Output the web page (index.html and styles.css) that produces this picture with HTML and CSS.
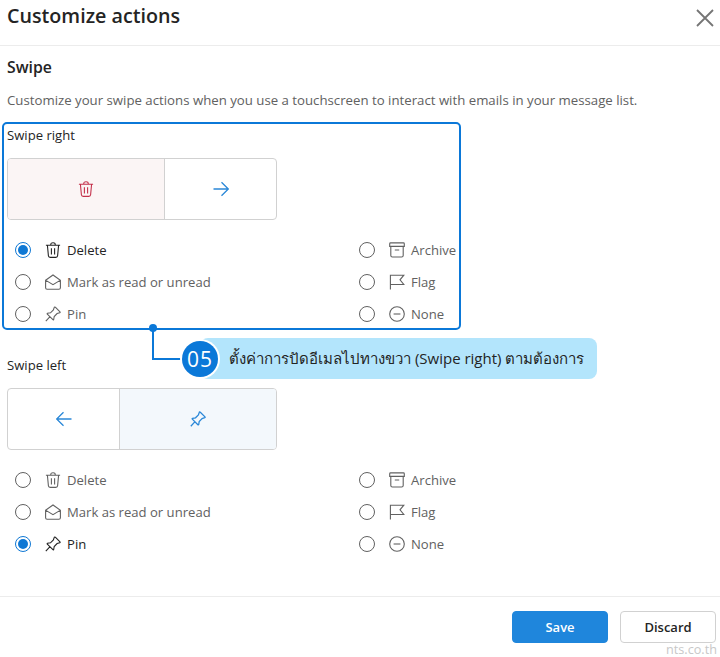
FILE: index.html
```html
<!DOCTYPE html>
<html lang="en">
<head>
  <meta charset="UTF-8">
  <meta name="viewport" content="width=device-width, initial-scale=1.0">
  <title>Customize actions</title>
  <link rel="stylesheet" href="styles.css">
</head>
<body>
  <svg class="icon-defs" width="0" height="0">
    <symbol id="i-delete" viewBox="0 0 16 16"><path d="M5.800 3V2.200C5.800 1.300 6.800.7 8 .7s2.200.6 2.200 1.500V3M.9 3.200h14.200M2.400 3.200l1 10.600c.1 1 .8 1.600 1.700 1.600h5.800c.9 0 1.600-.6 1.700-1.600l1-10.600M6.400 6.200v6.200M9.600 6.200v6.200"/></symbol>
    <symbol id="i-mail" viewBox="0 0 16 16"><path d="M.6 6.200 8 1l7.400 5.200v7.600c0 .9-.7 1.500-1.500 1.500H2.100c-.8 0-1.500-.6-1.500-1.500zM.9 6.400 8 10.600l7.100-4.200"/></symbol>
    <symbol id="i-pin" viewBox="0 0 16 16"><path d="M10.300 1.200 15 5.900c.3.300.2.700-.2.800l-2.700.9-2.900 2.900-.5 3c-.1.400-.5.500-.8.200L2.300 8.100c-.3-.3-.2-.7.2-.8l3-.5 2.900-2.900.9-2.700c.1-.4.700-.2 1 0zM4.800 10.900.8 15.200"/></symbol>
    <symbol id="i-archive" viewBox="0 0 16 16"><path d="M1.600.9h12.800c.5 0 .9.400.9.900v2.600H.7V1.800c0-.5.400-.9.900-.9zM1.800 4.400v9c0 .9.700 1.600 1.600 1.600h9.200c.9 0 1.600-.7 1.600-1.600v-9M5.800 8h4.400"/></symbol>
    <symbol id="i-flag" viewBox="0 0 16 16"><path d="M1.400 15.500V1.200h13.400L11 5.800l3.800 4.700H1.400"/></symbol>
    <symbol id="i-none" viewBox="0 0 16 16"><circle cx="8" cy="8" r="7.300"/><path d="M4.600 8h6.800"/></symbol>
    <symbol id="i-right" viewBox="0 0 16 16"><path d="M.5 8h14.500M8.500 1.200 15.300 8l-6.800 6.800"/></symbol>
    <symbol id="i-left" viewBox="0 0 16 16"><path d="M15.500 8H1M7.500 1.200.7 8l6.800 6.800"/></symbol>
  </svg>

  <div class="dialog">
    <header class="dialog-header">
      <h1>Customize actions</h1>
      <svg class="close" viewBox="0 0 18 18"><path d="M1 1l16 16M17 1 1 17"/></svg>
    </header>

    <main class="dialog-body">
      <h2>Swipe</h2>
      <p class="intro">Customize your swipe actions when you use a touchscreen to interact with emails in your message list.</p>

      <section class="swipe swipe-right">
        <div class="swipe-label">Swipe right</div>
        <div class="preview">
          <div class="pane pane-delete"><svg class="pane-icon"><use href="#i-delete"/></svg></div>
          <div class="pane pane-plain"><svg class="pane-icon"><use href="#i-right"/></svg></div>
        </div>
        <div class="options">
          <div class="option selected"><span class="radio"></span><svg class="opt-icon"><use href="#i-delete"/></svg>Delete</div>
          <div class="option"><span class="radio"></span><svg class="opt-icon"><use href="#i-archive"/></svg>Archive</div>
          <div class="option"><span class="radio"></span><svg class="opt-icon"><use href="#i-mail"/></svg>Mark as read or unread</div>
          <div class="option"><span class="radio"></span><svg class="opt-icon"><use href="#i-flag"/></svg>Flag</div>
          <div class="option"><span class="radio"></span><svg class="opt-icon"><use href="#i-pin"/></svg>Pin</div>
          <div class="option"><span class="radio"></span><svg class="opt-icon"><use href="#i-none"/></svg>None</div>
        </div>
      </section>

      <section class="swipe swipe-left">
        <div class="swipe-label">Swipe left</div>
        <div class="preview">
          <div class="pane pane-plain"><svg class="pane-icon"><use href="#i-left"/></svg></div>
          <div class="pane pane-pin"><svg class="pane-icon"><use href="#i-pin"/></svg></div>
        </div>
        <div class="options">
          <div class="option"><span class="radio"></span><svg class="opt-icon"><use href="#i-delete"/></svg>Delete</div>
          <div class="option"><span class="radio"></span><svg class="opt-icon"><use href="#i-archive"/></svg>Archive</div>
          <div class="option"><span class="radio"></span><svg class="opt-icon"><use href="#i-mail"/></svg>Mark as read or unread</div>
          <div class="option"><span class="radio"></span><svg class="opt-icon"><use href="#i-flag"/></svg>Flag</div>
          <div class="option selected"><span class="radio"></span><svg class="opt-icon"><use href="#i-pin"/></svg>Pin</div>
          <div class="option"><span class="radio"></span><svg class="opt-icon"><use href="#i-none"/></svg>None</div>
        </div>
      </section>
    </main>

    <footer class="dialog-footer">
      <button class="btn btn-primary">Save</button>
      <button class="btn">Discard</button>
    </footer>
  </div>

  <!-- Callout drawn over the dialog -->
  <div class="connector"></div>
  <div class="connector-dot"></div>
  <div class="callout">
    <span class="callout-num">05</span>
    <span class="callout-text">ตั้งค่าการปัดอีเมลไปทางขวา (Swipe right) ตามต้องการ</span>
  </div>
  <div class="watermark">nts.co.th</div>
</body>
</html>
```

FILE: styles.css
```css
* {
  box-sizing: border-box;
}

html, body {
  margin: 0;
  height: 657px;
  overflow: hidden;
}

body {
  position: relative;
  background: #fff;
  font-family: "Open Sans", "Noto Sans", "DejaVu Sans", sans-serif;
  color: #242424;
}

.icon-defs {
  position: absolute;
}

.dialog-header {
  display: flex;
  justify-content: space-between;
  height: 46px;
  padding: 4px 6px 0 7px;
  border-bottom: 1px solid #ececec;
}

h1 {
  margin: 0;
  font-size: 19.700px;
  line-height: 24px;
  font-weight: 600;
}

.close {
  width: 18px;
  height: 18px;
  margin-top: 5px;
  fill: none;
  stroke: #757575;
  stroke-width: 1.800;
}

.dialog-body {
  height: 550px;
  padding: 11px 0 0 2px;
}

h2 {
  margin: 0 0 0 5px;
  font-size: 15.800px;
  line-height: 20px;
  font-weight: 600;
}

.intro {
  margin: 13px 0 0 5px;
  font-size: 13.230px;
  line-height: 20px;
  color: #616161;
  white-space: nowrap;
}

.swipe {
  width: 459px;
  margin-top: 12px;
  padding: 2px 3px 0 3px;
  border: 2px solid transparent;
  border-radius: 5px;
}

.swipe-right {
  border-color: #0b78d8;
  height: 208px;
}

.swipe-left {
  margin-top: 22px;
}

.swipe-label {
  font-size: 13.100px;
  line-height: 18px;
}

.preview {
  display: flex;
  width: 270px;
  height: 62px;
  margin-top: 14px;
  border: 1px solid #d1d1d1;
  border-radius: 4px;
  overflow: hidden;
}

.swipe-right .pane:first-child {
  width: 156px;
}

.swipe-left .pane:first-child {
  width: 111px;
}

.pane {
  display: flex;
  flex: none;
  align-items: center;
  justify-content: center;
}

.pane:last-child {
  flex: 1;
  border-left: 1px solid #d1d1d1;
}

.pane-delete {
  background: #fbf5f5;
}

.pane-pin {
  background: #f3f8fc;
}

.pane-icon {
  width: 16px;
  height: 16px;
  fill: none;
  stroke: #2b88d8;
  stroke-width: 1.300;
}

.pane-delete .pane-icon {
  stroke: #c4314b;
  stroke-width: 1.100;
}

.options {
  display: grid;
  grid-template-columns: 344px auto;
  grid-auto-rows: 32px;
  margin-top: 14px;
}

.option {
  display: flex;
  align-items: center;
  font-size: 13.100px;
  color: #616161;
  white-space: nowrap;
}

.option.selected {
  color: #242424;
}

.radio {
  position: relative;
  flex: none;
  width: 16px;
  height: 16px;
  margin: 0 14px 0 8px;
  border: 1px solid #616161;
  border-radius: 50%;
}

.selected .radio {
  border-color: #0f78d4;
}

.selected .radio::after {
  content: "";
  position: absolute;
  inset: 2px;
  border-radius: 50%;
  background: #0f78d4;
}

.opt-icon {
  flex: none;
  width: 16px;
  height: 16px;
  margin-right: 6px;
  fill: none;
  stroke: #616161;
  stroke-width: 1.100;
}

.selected .opt-icon {
  stroke: #242424;
}

.dialog-footer {
  display: flex;
  justify-content: flex-end;
  gap: 12px;
  height: 61px;
  padding: 14px 4px 0 0;
  border-top: 1px solid #ececec;
}

.btn {
  width: 96px;
  height: 32px;
  padding: 0;
  background: #fff;
  border: 1px solid #d1d1d1;
  border-radius: 4px;
  font: 600 13px "Open Sans", sans-serif;
  color: #242424;
}

.btn-primary {
  background: #1f86dc;
  border-color: #1f86dc;
  color: #fff;
}

/* callout */
.connector {
  position: absolute;
  left: 152px;
  top: 328px;
  width: 34px;
  height: 32px;
  border-left: 2px solid #0b78d8;
  border-bottom: 2px solid #0b78d8;
}

.connector-dot {
  position: absolute;
  left: 149px;
  top: 324px;
  width: 8px;
  height: 8px;
  border-radius: 50%;
  background: #0b78d8;
}

.callout {
  position: absolute;
  left: 200px;
  top: 338px;
  display: flex;
  align-items: center;
  width: 397px;
  height: 41px;
  background: #b3e5fc;
  border-radius: 8px;
}

.callout-num {
  display: flex;
  align-items: center;
  justify-content: center;
  flex: none;
  width: 36px;
  height: 36px;
  margin: 0 11px 0 -18px;
  border-radius: 50%;
  background: #0b78d8;
  box-shadow: 0 0 0 2px #fff;
  color: #fff;
  font-size: 21px;
  font-weight: 500;
  letter-spacing: 1px;
}

.callout-text {
  font-size: 15px;
  color: #242424;
  white-space: nowrap;
}

.watermark {
  position: absolute;
  right: 3px;
  top: 642px;
  font-size: 12.700px;
  line-height: 15px;
  color: #c8c8c8;
}
```
